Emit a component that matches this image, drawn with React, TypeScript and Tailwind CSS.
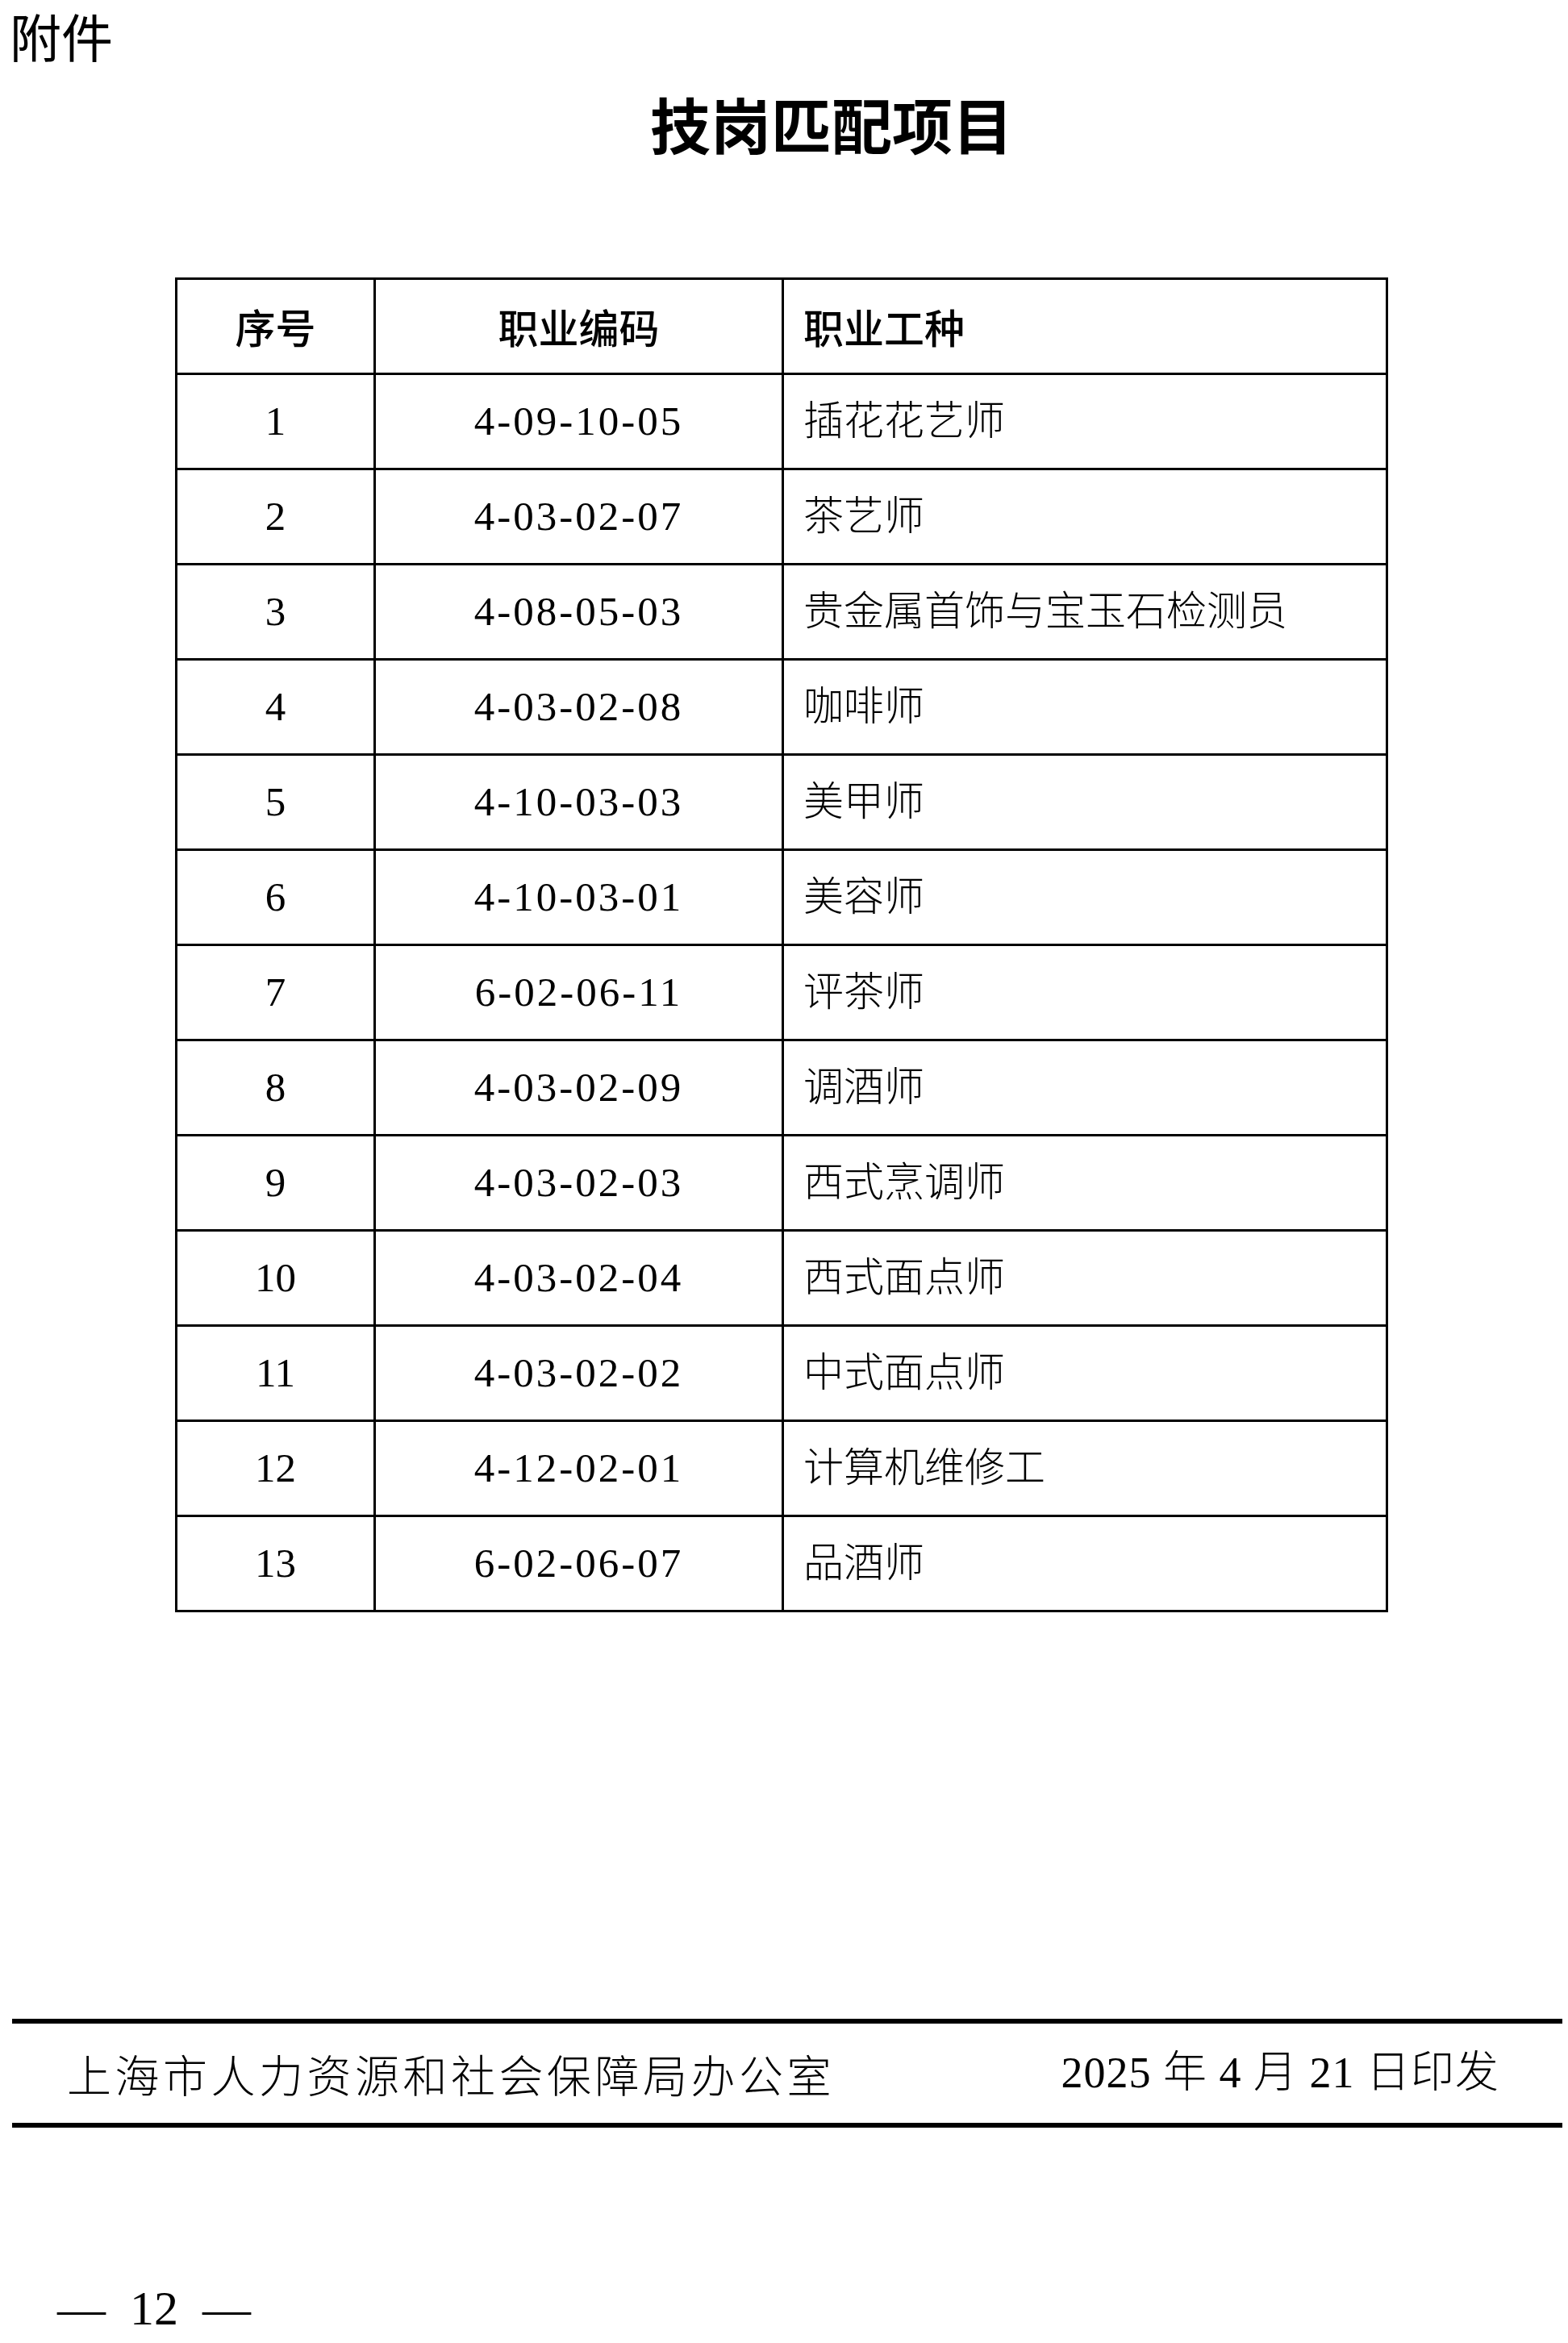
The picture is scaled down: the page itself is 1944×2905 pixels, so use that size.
const rows: [string, string, string][] = [
  ["1", "4-09-10-05", "插花花艺师"],
  ["2", "4-03-02-07", "茶艺师"],
  ["3", "4-08-05-03", "贵金属首饰与宝玉石检测员"],
  ["4", "4-03-02-08", "咖啡师"],
  ["5", "4-10-03-03", "美甲师"],
  ["6", "4-10-03-01", "美容师"],
  ["7", "6-02-06-11", "评茶师"],
  ["8", "4-03-02-09", "调酒师"],
  ["9", "4-03-02-03", "西式烹调师"],
  ["10", "4-03-02-04", "西式面点师"],
  ["11", "4-03-02-02", "中式面点师"],
  ["12", "4-12-02-01", "计算机维修工"],
  ["13", "6-02-06-07", "品酒师"],
];

const sans = "font-['Noto_Sans_CJK_SC',sans-serif]";
const serif = "font-['Liberation_Serif','Noto_Sans_CJK_SC',serif]";

export default function App() {
  return (
    <div className="w-[1944px] h-[2905px] bg-white text-black flex flex-col overflow-hidden">
      {/* attachment label */}
      <div className={`${sans} pl-[12px] pt-[5px] text-[64px] leading-[1.2]`}>附件</div>

      {/* title */}
      <h1 className={`${sans} mt-[33px] pl-[118px] text-center text-[75px] leading-none font-bold`}>
        技岗匹配项目
      </h1>

      {/* table */}
      <table className="ml-[217px] mt-[154px] w-[1504px] table-fixed border-collapse">
        <colgroup>
          <col className="w-[246px]" />
          <col className="w-[506px]" />
          <col />
        </colgroup>
        <thead>
          <tr className="h-[118px]">
            <th className={`${sans} border-[3px] border-black text-[50px] font-medium text-center align-middle`}>序号</th>
            <th className={`${sans} border-[3px] border-black text-[50px] font-medium text-center align-middle`}>职业编码</th>
            <th className={`${sans} border-[3px] border-black text-[50px] font-medium text-left pl-[24px] align-middle`}>职业工种</th>
          </tr>
        </thead>
        <tbody>
          {rows.map(([no, code, name]) => (
            <tr key={no} className="h-[118px]">
              <td className={`${serif} border-[3px] border-black text-[51px] text-center align-middle`}>{no}</td>
              <td className={`${serif} border-[3px] border-black text-[51px] tracking-[3px] text-center align-middle`}>{code}</td>
              <td className={`${serif} border-[3px] border-black text-[50px] font-light pl-[24px] align-middle`}>{name}</td>
            </tr>
          ))}
        </tbody>
      </table>

      {/* issuing footer */}
      <div className="mt-[504px] ml-[15px] mr-[7px] h-[135px] border-y-[6px] border-black flex items-center justify-between pl-[68px] pr-[78px]">
        <span className={`${sans} text-[55px] font-light tracking-[4.5px]`}>上海市人力资源和社会保障局办公室</span>
        <span className={`${serif} text-[54px] font-light tracking-[1px]`}>2025 年 4 月 21 日印发</span>
      </div>

      {/* page number */}
      <div className="mt-[194px] pl-[71px] flex items-center gap-[30px] font-['Liberation_Serif',serif] text-[60px] leading-none">
        <span>—</span>
        <span>12</span>
        <span>—</span>
      </div>
    </div>
  );
}
